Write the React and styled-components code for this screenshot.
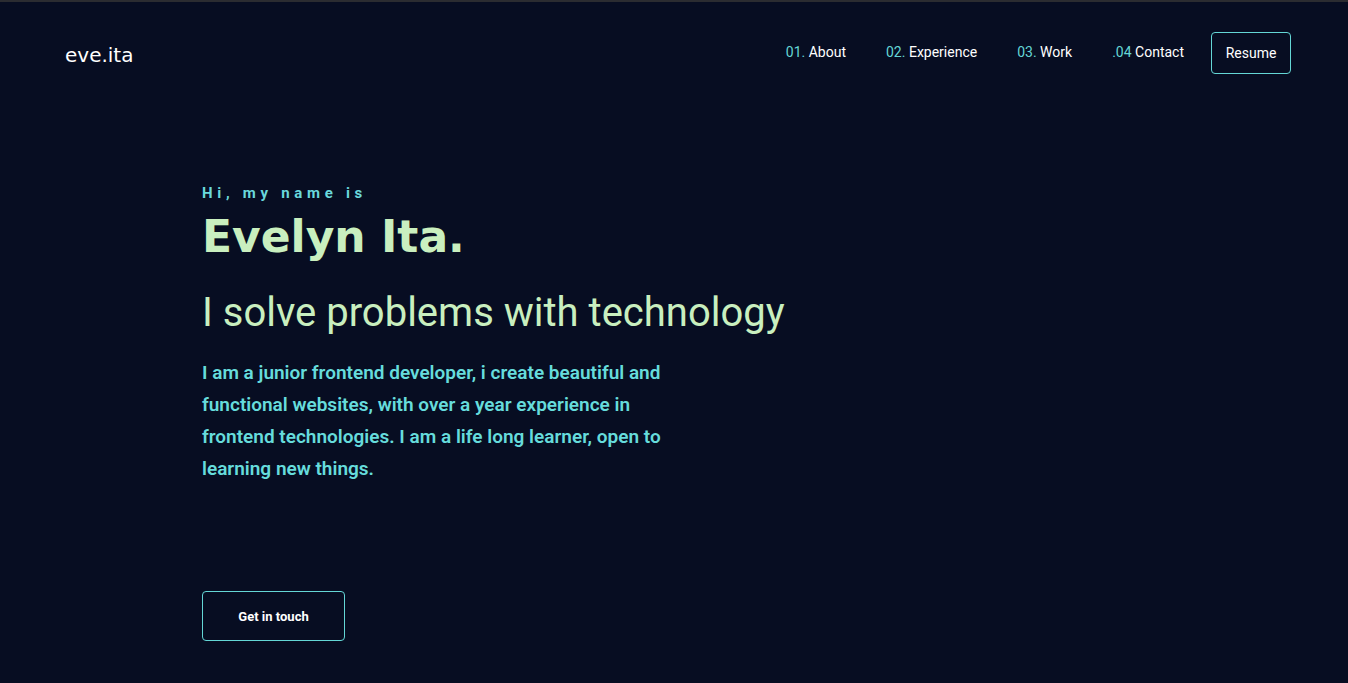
import React from "react"
import styled, { createGlobalStyle } from "styled-components"

const GlobalStyle = createGlobalStyle`
    * {
        box-sizing: border-box;
    }
    body {
        margin: 0;
        background: #070d22;
        font-family: Roboto, "Liberation Sans", sans-serif;
    }
`

const links = [
    { num: "01.", label: "About" },
    { num: "02.", label: "Experience" },
    { num: "03.", label: "Work" },
    { num: ".04", label: "Contact" },
]

export default function App() {
    return (
        <>
            <GlobalStyle />
            <Page>
                <Nav>
                    <Logo>eve.ita</Logo>
                    <Menu>
                        {links.map((l) => (
                            <MenuItem key={l.label}>
                                <span>{l.num}</span> {l.label}
                            </MenuItem>
                        ))}
                        <OutlineButton small>Resume</OutlineButton>
                    </Menu>
                </Nav>
                <Hero>
                    <Greeting>Hi, my name is</Greeting>
                    <Name>Evelyn Ita.</Name>
                    <Tagline>I solve problems with technology</Tagline>
                    <Intro>
                        I am a junior frontend developer, i create beautiful and functional websites,
                        with over a year experience in frontend technologies. I am a life long learner,
                        open to learning new things.
                    </Intro>
                    <OutlineButton>Get in touch</OutlineButton>
                </Hero>
            </Page>
        </>
    )
}

const Page = styled.div`
    min-height: 683px;
    border-top: 2px solid #2b2c31;
    background: #070d22;
`

const Nav = styled.header`
    display: flex;
    align-items: center;
    justify-content: space-between;
    padding: 30px 57px 0 65px;
`

const Logo = styled.div`
    font-family: "Comic Sans MS", "DejaVu Sans", sans-serif;
    font-size: 20px;
    color: #ffffff;
    margin-top: 3px;
`

const Menu = styled.nav`
    display: flex;
    align-items: center;
`

const MenuItem = styled.a`
    font-size: 14px;
    color: #ffffff;
    margin-right: 40px;
    margin-top: -2px;

    span {
        color: #64d6d6;
    }
    &:nth-child(4) {
        margin-right: 27px;
    }
`

const OutlineButton = styled.button`
    font-family: Roboto, "Liberation Sans", sans-serif;
    background: transparent;
    border: 1px solid #64d6d6;
    border-radius: 4px;
    color: #ffffff;
    cursor: pointer;
    width: ${(p) => (p.small ? "80px" : "143px")};
    height: ${(p) => (p.small ? "42px" : "50px")};
    font-size: ${(p) => (p.small ? "14px" : "13px")};
    font-weight: ${(p) => (p.small ? 400 : 700)};
    margin-top: ${(p) => (p.small ? "0" : "106px")};
`

const Hero = styled.main`
    padding: 110px 0 0 202px;
    display: flex;
    flex-direction: column;
    align-items: flex-start;
`

const Greeting = styled.p`
    margin: 0;
    font-size: 15px;
    font-weight: 700;
    letter-spacing: 4.7px;
    color: #6ad8dc;
`

const Name = styled.h1`
    margin: 9px 0 0;
    font-family: "Comic Sans MS", "DejaVu Sans", sans-serif;
    font-size: 44px;
    font-weight: 700;
    color: #c9efbf;
`

const Tagline = styled.h2`
    margin: 27px 0 0;
    font-size: 40px;
    font-weight: 400;
    color: #c9efbf;
`

const Intro = styled.p`
    margin: 21px 0 0;
    width: 480px;
    font-size: 19px;
    font-weight: 600;
    line-height: 32px;
    color: #66dcdc;
`
